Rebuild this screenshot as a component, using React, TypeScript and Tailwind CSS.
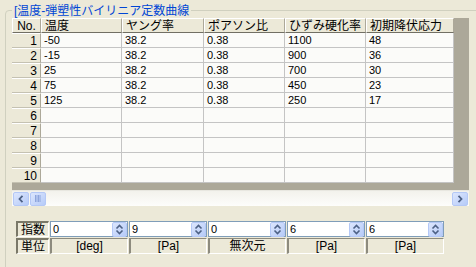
import React from "react";

const font = { fontFamily: '"Liberation Sans", "Noto Sans CJK JP", sans-serif' };

const columns = [
  { label: "温度", w: "w-[81px]" },
  { label: "ヤング率", w: "w-[82px]" },
  { label: "ポアソン比", w: "w-[81px]" },
  { label: "ひずみ硬化率", w: "w-[81px]" },
  { label: "初期降伏応力", w: "w-[88px]" },
];

const rows: string[][] = [
  ["-50", "38.2", "0.38", "1100", "48"],
  ["-15", "38.2", "0.38", "900", "36"],
  ["25", "38.2", "0.38", "700", "30"],
  ["75", "38.2", "0.38", "450", "23"],
  ["125", "38.2", "0.38", "250", "17"],
  ["", "", "", "", ""],
  ["", "", "", "", ""],
  ["", "", "", "", ""],
  ["", "", "", "", ""],
  ["", "", "", "", ""],
];

const exps = ["0", "9", "0", "6", "6"];
const units = ["[deg]", "[Pa]", "無次元", "[Pa]", "[Pa]"];

const XpButton: React.FC<{ children: React.ReactNode; className?: string }> = ({ children, className = "" }) => (
  <div
    className={`flex items-center justify-center rounded-[2px] border border-[#b4c8f6] bg-gradient-to-br from-[#dce6fd] to-[#b6cbf8] ${className}`}
  >
    {children}
  </div>
);

const Spin = () => (
  <XpButton className="w-[15px] h-[15px] shrink-0">
    <svg width="9" height="11" viewBox="0 0 9 11">
      <path d="M1.5 4.5 L4.5 1.5 L7.5 4.5" fill="none" stroke="#4d6185" strokeWidth="1.6" />
      <path d="M1.5 6.5 L4.5 9.5 L7.5 6.5" fill="none" stroke="#4d6185" strokeWidth="1.6" />
    </svg>
  </XpButton>
);

export default function App() {
  return (
    <div className="w-[476px] h-[267px] bg-[#ece9d8] overflow-hidden text-[12px] text-black" style={font}>
      <div className="relative ml-[5px] mt-[10px] w-[480px] h-[270px] border border-[#d0d0bf] rounded-tl-[4px] pl-[6px] pt-[7px]">
        <span className="absolute left-[6px] -top-[7px] bg-[#ece9d8] px-[2px] text-[#0046d5] leading-[14px] text-[12px]">
          [温度-弾塑性バイリニア定数曲線
        </span>

        {/* grid */}
        <div className="w-[457px] bg-[#aca899]">
          <div className="flex h-[15px]">
            <div className="w-[29px] flex items-center justify-center bg-[#ece9d8] border-t border-l border-white border-r border-b border-r-[#aca899] border-b-[#716f64]">
              No.
            </div>
            {columns.map((c) => (
              <div
                key={c.label}
                className={`${c.w} flex items-center pl-[3px] bg-[#ece9d8] border-t border-l border-white border-r border-b border-r-[#aca899] border-b-[#716f64] whitespace-nowrap overflow-hidden`}
              >
                {c.label}
              </div>
            ))}
          </div>
          {rows.map((r, i) => (
            <div key={i} className="flex h-[15px]">
              <div className="w-[29px] flex items-center justify-end pr-[3px] bg-[#ece9d8] border-t border-white border-r border-b border-r-[#aca899] border-b-[#c5c2b2]">
                {i + 1}
              </div>
              {columns.map((c, j) => (
                <div
                  key={j}
                  className={`${c.w} flex items-center pl-[3px] bg-[#fbfbf9] border-r border-b border-[#c4c4c4] text-[11px]`}
                >
                  {r[j]}
                </div>
              ))}
            </div>
          ))}
          <div className="h-[7px]" />
          <div className="flex items-center h-[16px] px-[1px] bg-gradient-to-b from-[#f3f2ec] to-[#fdfdfb] border-t border-[#e8e7e0]">
            <XpButton className="w-[16px] h-[14px]">
              <svg width="6" height="8" viewBox="0 0 6 8">
                <path d="M4.5 0.8 L1.5 4 L4.5 7.2" fill="none" stroke="#4d6185" strokeWidth="1.8" />
              </svg>
            </XpButton>
            <XpButton className="w-[16px] h-[14px] ml-[1px]">
              <svg width="6" height="7" viewBox="0 0 6 7">
                <path d="M0.5 0 V7 M2 0 V7 M3.5 0 V7 M5 0 V7" stroke="#8ea5dc" strokeWidth="1" />
              </svg>
            </XpButton>
            <div className="flex-1" />
            <XpButton className="w-[16px] h-[14px]">
              <svg width="6" height="8" viewBox="0 0 6 8">
                <path d="M1.5 0.8 L4.5 4 L1.5 7.2" fill="none" stroke="#4d6185" strokeWidth="1.8" />
              </svg>
            </XpButton>
          </div>
        </div>

        {/* exponent / unit rows */}
        <div className="mt-[15px] ml-[4px] flex flex-col gap-[1px]">
          <div className="flex h-[16px] gap-[1px]">
            <div className="w-[33px] flex items-center justify-center border-t-2 border-l-2 border-[#7a7868] border-r border-b border-r-white border-b-white">
              指数
            </div>
            {exps.map((v, i) => (
              <div key={i} className="w-[78px] flex items-center border border-[#7f9db9] bg-white pl-[2px] text-[11px]">
                <span className="flex-1">{v}</span>
                <Spin />
              </div>
            ))}
          </div>
          <div className="flex h-[16px] gap-[1px]">
            <div className="w-[33px] flex items-center justify-center border-t-2 border-l-2 border-[#7a7868] border-r border-b border-r-white border-b-white">
              単位
            </div>
            {units.map((u, i) => (
              <div
                key={i}
                className="w-[78px] flex items-center justify-center border-t border-l-2 border-[#8d8b7e] border-r border-b border-r-white border-b-white"
              >
                {u}
              </div>
            ))}
          </div>
        </div>
      </div>
    </div>
  );
}
